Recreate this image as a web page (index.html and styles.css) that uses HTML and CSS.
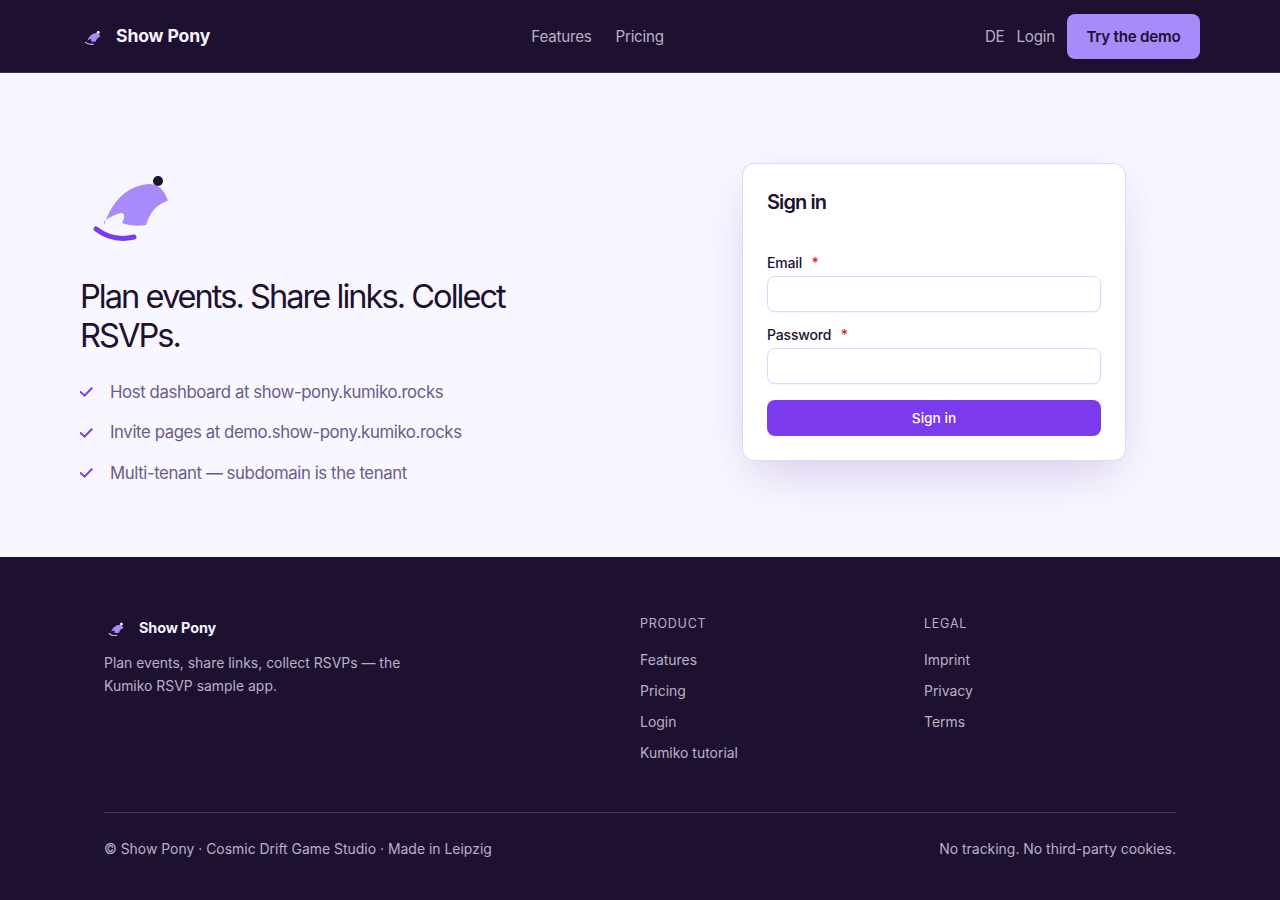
FILE: index.html
```html
<!DOCTYPE html>
<html lang="en">
<head>
  <meta charset="utf-8">
  <meta name="viewport" content="width=device-width, initial-scale=1.0">
  <title>Show Pony - Sign in</title>
  <link rel="stylesheet" href="styles.css">
</head>
<body>

  <svg class="sprite" aria-hidden="true">
    <symbol id="pony" viewBox="0 0 96 96">
      <path class="pony-body" d="M24.3 65 L24 61.5 L26 60 C34 39 49 25 70 24 C79 24.500 84 30 88 40.600 C77 44.500 70 52 66 65 C58 66.500 50 65.500 42 63 L44 58.500 C44.500 54.500 43.500 52.800 41 53 C35 54.500 30 57 25.500 60.500 Z"/>
      <path class="pony-rocker" d="M16 69 Q33 82 54 77"/>
      <circle class="pony-dot" cx="78" cy="21" r="5"/>
    </symbol>
    <symbol id="check" viewBox="0 0 14 14">
      <path d="M0 6.500 L4.500 10.700 L12.200 2.700"/>
    </symbol>
  </svg>

  <header class="header">
    <div class="header-inner">
      <a class="brand" href="#"><svg class="logo"><use href="#pony"/></svg>Show Pony</a>
      <nav class="nav">
        <a href="#">Features</a>
        <a href="#">Pricing</a>
      </nav>
      <div class="actions">
        <a href="#">DE</a>
        <a href="#">Login</a>
        <a class="cta" href="#">Try the demo</a>
      </div>
    </div>
  </header>

  <main class="main">
    <section class="intro">
      <svg class="hero-logo"><use href="#pony"/></svg>
      <h1>Plan events. Share links. Collect RSVPs.</h1>
      <ul class="points">
        <li><svg class="check"><use href="#check"/></svg>Host dashboard at show-pony.kumiko.rocks</li>
        <li><svg class="check"><use href="#check"/></svg>Invite pages at demo.show-pony.kumiko.rocks</li>
        <li><svg class="check"><use href="#check"/></svg>Multi-tenant — subdomain is the tenant</li>
      </ul>
    </section>

    <form class="card">
      <h2>Sign in</h2>
      <div class="field">
        <label for="email">Email <span class="required">*</span></label>
        <input id="email" type="email">
      </div>
      <div class="field">
        <label for="password">Password <span class="required">*</span></label>
        <input id="password" type="password">
      </div>
      <button class="submit" type="button">Sign in</button>
    </form>
  </main>

  <footer class="footer">
    <div class="footer-inner">
      <div class="footer-top">
        <div class="about">
          <a class="brand brand-small" href="#"><svg class="logo"><use href="#pony"/></svg>Show Pony</a>
          <p>Plan events, share links, collect RSVPs — the Kumiko RSVP sample app.</p>
        </div>
        <div class="links">
          <h3>Product</h3>
          <a href="#">Features</a>
          <a href="#">Pricing</a>
          <a href="#">Login</a>
          <a href="#">Kumiko tutorial</a>
        </div>
        <div class="links">
          <h3>Legal</h3>
          <a href="#">Imprint</a>
          <a href="#">Privacy</a>
          <a href="#">Terms</a>
        </div>
      </div>
      <div class="footer-bottom">
        <span>© Show Pony · Cosmic Drift Game Studio · Made in Leipzig</span>
        <span>No tracking. No third-party cookies.</span>
      </div>
    </div>
  </footer>

</body>
</html>
```

FILE: styles.css
```css
* {
  box-sizing: border-box;
}

body {
  margin: 0;
  background: #1e1030;
  color: #1e1030;
  font-family: Inter, "Liberation Sans", sans-serif;
  font-size: 16px;
  line-height: 1.6;
}

a {
  color: inherit;
  text-decoration: none;
}

h1, h2, h3, p, ul {
  margin: 0;
  padding: 0;
}

.sprite {
  display: none;
}

/* logo */
.pony-body {
  fill: #a78bfa;
}

.pony-rocker {
  fill: none;
  stroke: var(--rocker);
  stroke-width: var(--rocker-width);
  stroke-linecap: round;
}

.pony-dot {
  fill: var(--dot);
  r: var(--dot-size);
}

.logo {
  --rocker: #c4b5fd;
  --rocker-width: 6;
  --dot: #fff;
  --dot-size: 7px;
  width: 20px;
  height: 20px;
  margin: 4px 14px 0 2px;
}

.hero-logo {
  --rocker: #7c3aed;
  --rocker-width: 5;
  --dot: #1e1030;
  --dot-size: 5px;
  display: block;
  width: 96px;
  height: 96px;
}

/* header */
.header {
  height: 73px;
  border-bottom: 1px solid #3b2e4d;
  background: #1e1030;
}

.header-inner {
  display: flex;
  justify-content: space-between;
  align-items: center;
  width: 1120px;
  height: 72px;
  margin: 0 auto;
  padding-top: 1px;
}

.brand {
  display: flex;
  align-items: center;
  padding-bottom: 1px;
  color: #f5f3ff;
  font-size: 17.600px;
  font-weight: 700;
  letter-spacing: -0.008em;
}

.nav,
.actions {
  display: flex;
  align-items: center;
  color: #b9b0c6;
  font-size: 15.200px;
  letter-spacing: -0.25px;
}

.nav {
  gap: 24px;
  padding-top: 2px;
}

.actions {
  gap: 12px;
}

.actions a {
  padding-top: 2px;
}

.actions .cta {
  padding: 11px 19.500px 10px;
  border-radius: 8px;
  background: #a78bfa;
  color: #1e1030;
  font-weight: 600;
}

/* main */
.main {
  display: grid;
  grid-template-columns: 1fr 384px;
  align-items: center;
  height: 484px;
  padding: 0 154px 0 80px;
  background: #f8f7ff;
}

.intro {
  padding-top: 17px;
}

.intro h1 {
  width: 460px;
  margin-top: 21px;
  font-size: 32.600px;
  font-weight: 400;
  line-height: 38.600px;
  letter-spacing: -1.980px;
}

.points {
  display: grid;
  gap: 13.600px;
  margin-top: 24px;
  color: #6b5b8a;
  font-size: 16.800px;
  line-height: 26.900px;
  letter-spacing: -0.41px;
  list-style: none;
}

.points li {
  display: flex;
  align-items: center;
}

.check {
  width: 14px;
  height: 14px;
  margin-right: 16px;
  fill: none;
  stroke: #7c3aed;
  stroke-width: 2;
  overflow: visible;
}

.card {
  display: flex;
  flex-direction: column;
  gap: 16px;
  height: 298px;
  margin-bottom: 6px;
  padding: 24px;
  border: 1px solid #ddd6fe;
  border-radius: 12px;
  background: #fff;
  box-shadow: 0 24px 48px -16px rgba(66, 16, 92, 0.15), 0 8px 48px rgba(124, 58, 237, 0.08);
}

.card h2 {
  height: 52px;
  font-size: 20px;
  font-weight: 600;
  line-height: 28px;
  letter-spacing: -0.045em;
}

.field {
  display: grid;
  gap: 6px;
}

.field label {
  font-size: 14px;
  font-weight: 500;
  line-height: 14px;
  letter-spacing: -0.012em;
}

.required {
  margin-left: 6px;
  color: #dc2626;
}

.field input {
  width: 100%;
  height: 36px;
  border: 1px solid #ddd6fe;
  border-radius: 8px;
  background: #fff;
  box-shadow: 0 1px 2px rgba(0, 0, 0, 0.05);
}

.submit {
  height: 36px;
  padding-bottom: 2px;
  border: 0;
  border-radius: 8px;
  background: #7c3aed;
  color: #fff;
  font: 500 13.700px Inter, "Liberation Sans", sans-serif;
}

/* footer */
.footer {
  height: 343px;
  padding-top: 56px;
  background: #1e1030;
  color: #b9b0c6;
  font-size: 13.950px;
}

.footer-inner {
  width: 1072px;
  margin: 0 auto;
}

.footer-top {
  display: grid;
  grid-template-columns: 2fr 1fr 1fr;
  gap: 32px;
  height: 199px;
}

.brand-small {
  margin-top: 3px;
  padding-bottom: 0;
  font-size: 14.400px;
}

.brand-small .logo {
  width: 19px;
  height: 19px;
  margin-top: 3px;
  margin-right: 14px;
}

.about p {
  width: 320px;
  margin-top: 12px;
  line-height: 23px;
}

.links {
  display: flex;
  flex-direction: column;
  gap: 8px;
  line-height: 23px;
}

.links h3 {
  margin-bottom: 6px;
  font-size: 12.500px;
  font-weight: 400;
  line-height: 21px;
  letter-spacing: 0.06em;
  text-transform: uppercase;
}

.footer-bottom {
  display: flex;
  justify-content: space-between;
  padding-top: 25px;
  border-top: 1px solid #42364f;
}
```
